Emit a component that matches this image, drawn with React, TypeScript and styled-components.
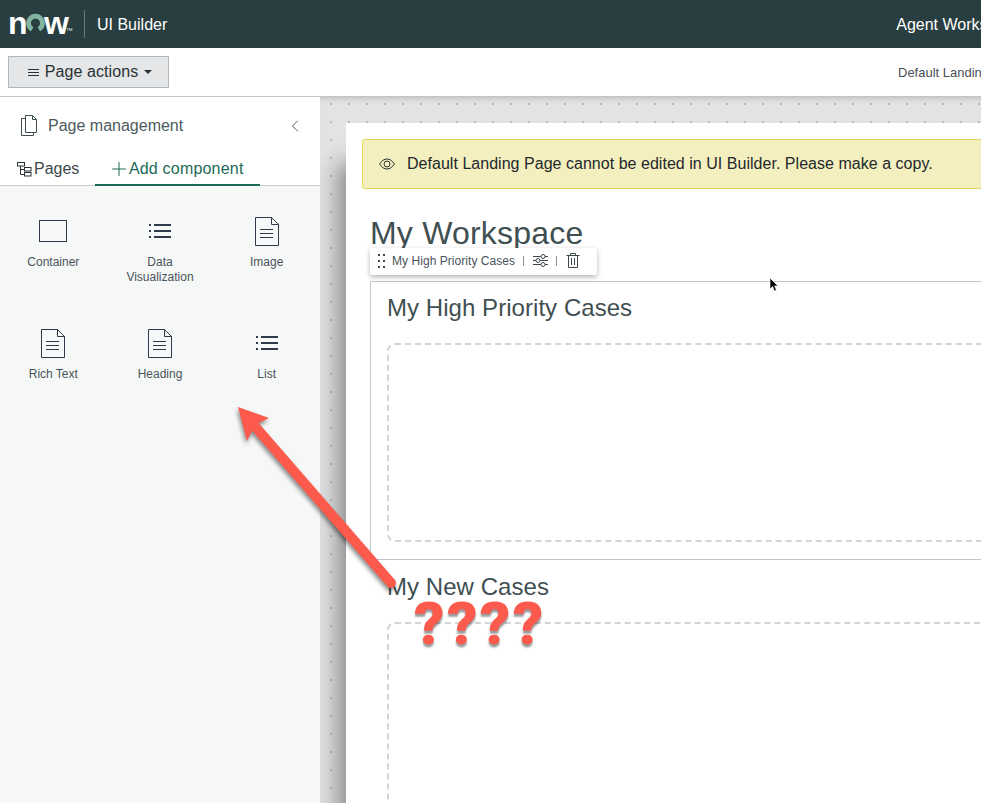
import styled, { createGlobalStyle } from "styled-components";
import { ChevronLeft, Plus } from "lucide-react";

const GlobalStyle = createGlobalStyle`
  html, body {
    margin: 0;
    height: 100%;
    overflow: hidden;
    background: #fff;
  }
  body {
    font-family: "Liberation Sans", Arial, sans-serif;
    color: #3f4d50;
  }
  #root { height: 100%; }
`;

const Shell = styled.div`
  position: relative;
  display: flex;
  flex-direction: column;
  width: 981px;
  height: 803px;
  overflow: hidden;
`;

const Header = styled.header`
  display: flex;
  align-items: center;
  flex: 0 0 48px;
  padding-left: 8px;
  background: #293e40;
  color: #fff;
  white-space: nowrap;
`;

const Logo = styled.div`
  display: flex;
  align-items: center;
  flex: 0 0 76px;
  height: 32px;
  margin-top: -2px;
  font-size: 32px;
  font-weight: 700;
  line-height: 32px;
  letter-spacing: -1.5px;
  color: #fff;

  svg {
    margin-right: -1px;
  }
`;

const Trademark = styled.span`
  align-self: flex-end;
  margin: 0 0 7px -1px;
  font-size: 4px;
  line-height: 4px;
  font-weight: 400;
  letter-spacing: 0;
`;

const Brand = styled.div`
  flex: none;
  padding-left: 12px;
  height: 28px;
  line-height: 30px;
  border-left: 1px solid #6b7c7e;
  font-size: 16px;
`;

const Workspace = styled.div`
  flex: none;
  margin: 2px 0 0 729px;
  font-size: 16px;
`;

const Toolbar = styled.div`
  display: flex;
  align-items: center;
  flex: 0 0 49px;
  box-sizing: border-box;
  padding-left: 8px;
  background: #fff;
  border-bottom: 1px solid #c4c6c8;
  white-space: nowrap;
`;

const ActionsButton = styled.button`
  display: flex;
  align-items: center;
  justify-content: center;
  gap: 6px;
  flex: 0 0 161px;
  height: 32px;
  padding: 0 0 0 3px;
  background: #e4e6e7;
  border: 1px solid #b2b8ba;
  color: #293135;
  font: 16px "Liberation Sans", Arial, sans-serif;
  letter-spacing: 0.1px;
`;

const Caret = styled.span`
  width: 0;
  height: 0;
  border-left: 4.5px solid transparent;
  border-right: 4.5px solid transparent;
  border-top: 4.5px solid #293135;
`;

const PageName = styled.div`
  flex: none;
  margin-left: 729px;
  font-size: 13px;
  color: #484f57;
`;

const Main = styled.div`
  display: flex;
  flex: 1;
  min-height: 0;
`;

const Sidebar = styled.aside`
  display: flex;
  flex-direction: column;
  flex: 0 0 320px;
  background: #f6f8f7;
`;

const SidebarHead = styled.div`
  background: #fff;
  border-bottom: 1px solid #c9cdce;
  height: 88px;
`;

const TitleRow = styled.div`
  display: flex;
  align-items: center;
  height: 57px;
  padding: 0 20px;
  gap: 10px;
  font-size: 16px;
  color: #4c5a5c;
`;

const Collapse = styled.span`
  display: flex;
  margin-left: auto;
  margin-right: -5px;
  color: #3f4d50;
`;

const Tabs = styled.div`
  display: flex;
  height: 31px;
  padding-left: 17px;
`;

const Tab = styled.div<{ $active?: boolean }>`
  display: flex;
  align-items: center;
  box-sizing: border-box;
  height: 32px;
  font-size: 16px;
  color: ${(p) => (p.$active ? "#1b6a57" : "#3c484b")};
  border-bottom: 2px solid ${(p) => (p.$active ? "#1b6a57" : "transparent")};
  margin-left: ${(p) => (p.$active ? "16px" : "0")};
  width: ${(p) => (p.$active ? "165px" : "auto")};
  padding-left: ${(p) => (p.$active ? "13px" : "0")};
  letter-spacing: ${(p) => (p.$active ? "0.2px" : "0")};

  svg + span {
    margin-left: -1.5px;
  }
`;

const ComponentGrid = styled.div`
  display: grid;
  grid-template-columns: repeat(3, 1fr);
  grid-auto-rows: 112px;
  padding-top: 29px;
`;

const ComponentItem = styled.div`
  display: flex;
  flex-direction: column;
  align-items: center;
  text-align: center;
  font-size: 12px;
  line-height: 15px;
  color: #4a545c;
`;

const ItemLabel = styled.div`
  width: 80px;
`;

const IconSlot = styled.div`
  display: flex;
  align-items: center;
  justify-content: center;
  height: 32px;
  margin-bottom: 8px;
  color: #2e3a4a;
`;

const Canvas = styled.section`
  flex: 1;
  min-width: 0;
  padding: 26px 0 0 26px;
  overflow: hidden;
  background-color: #e2e3e5;
  background-image: radial-gradient(circle, #b8babc 0.7px, transparent 1.1px);
  background-size: 18px 18px;
  background-position: 2px -2px;
  box-shadow: inset 0 6px 6px -5px rgba(0, 0, 0, 0.18);
`;

const PageSheet = styled.div`
  box-sizing: border-box;
  width: 900px;
  height: 900px;
  padding: 16px 0 0 16px;
  background: #fff;
  box-shadow: -8px 40px 22px rgba(0, 0, 0, 0.4);
`;

const Banner = styled.div`
  display: flex;
  align-items: center;
  gap: 12px;
  box-sizing: border-box;
  height: 50px;
  padding-left: 16px;
  background: #f4efbe;
  border: 1px solid #e2d95c;
  border-radius: 3px;
  font-size: 16px;
  letter-spacing: 0.03px;
  color: #22282c;
`;

const PageTitle = styled.h1`
  margin: 26px 0 0 8px;
  font-size: 32px;
  line-height: 37px;
  font-weight: 400;
  letter-spacing: 0.2px;
  color: #3f4f52;
`;

const CaseCard = styled.div`
  box-sizing: border-box;
  height: 279px;
  margin: 29px 0 0 8px;
  padding: 12px 0 0 16px;
  border: 1px solid #c2c5c6;
`;

const CaseTitle = styled.h2`
  margin: 0;
  font-size: 24px;
  line-height: 28px;
  font-weight: 400;
  letter-spacing: 0.05px;
  color: #3f4f52;
`;

const DropZone = styled.div<{ $height: number }>`
  height: ${(p) => p.$height}px;
  margin-top: 21px;
  border: 2px dashed #d2d5d6;
  border-radius: 8px;
`;

const PlainSection = styled.div`
  margin: 13px 0 0 25px;
  width: 700px;
`;

const SlotToolbar = styled.div`
  position: absolute;
  left: 370px;
  top: 248px;
  display: flex;
  align-items: center;
  box-sizing: border-box;
  width: 227px;
  height: 27px;
  padding: 0 0 2px 8px;
  background: #fff;
  border-radius: 2px;
  box-shadow: 0 2px 5px rgba(0, 0, 0, 0.3);
  font-size: 12px;
  letter-spacing: 0.05px;
  color: #4a545c;
  white-space: nowrap;
`;

const SlotDivider = styled.span`
  width: 1px;
  height: 10px;
  margin: 0 9px 0 8px;
  background: #8a9296;
`;

const Cursor = styled.svg`
  position: absolute;
  left: 769px;
  top: 277px;
`;

const Annotation = styled.svg`
  position: absolute;
  left: 0;
  top: 0;
  filter: drop-shadow(-1px 3px 2px rgba(0, 0, 0, 0.45));
`;

const QuestionMarks = styled.div`
  position: absolute;
  left: 414px;
  top: 590px;
  font-family: Roboto, "Liberation Sans", sans-serif;
  font-size: 60px;
  line-height: 68px;
  font-weight: 900;
  letter-spacing: 2.3px;
  color: #fb5a4c;
  text-shadow: 0 3px 2px rgba(0, 0, 0, 0.4);
`;

function ContainerIcon() {
  return (
    <svg width="30" height="24" viewBox="0 0 30 24" fill="none">
      <rect x="1.5" y="1.5" width="27" height="21" stroke="currentColor" />
    </svg>
  );
}

function ListIcon() {
  return (
    <svg width="22" height="16" viewBox="0 0 22 16" fill="currentColor">
      <rect x="0" y="1" width="2" height="2" />
      <rect x="0" y="7" width="2" height="2" />
      <rect x="0" y="13" width="2" height="2" />
      <rect x="5" y="1" width="17" height="2" />
      <rect x="5" y="7" width="17" height="2" />
      <rect x="5" y="13" width="17" height="2" />
    </svg>
  );
}

function DocIcon() {
  return (
    <svg width="24" height="29" viewBox="0 0 24 29" fill="none" stroke="currentColor">
      <path d="M0.5 0.5H16.5L23.5 7.5V28.5H0.5Z" />
      <path d="M16.5 0.5V7.5H23.5" />
      <path d="M5 12.5H18M5 16.5H18M5 20.5H18" />
    </svg>
  );
}

function PagesIcon() {
  return (
    <svg width="18" height="21" viewBox="0 0 18 21" fill="none" stroke="#3f4d50" strokeWidth="1">
      <path d="M5.5 0.5H12.5L16.5 4.5V17.5H5.5Z" fill="#fff" />
      <path d="M12.5 0.5V4.5H16.5" />
      <path d="M5.5 3.5H1.5V20.5H13.5V17.5" />
    </svg>
  );
}

function TreeIcon() {
  return (
    <svg width="15" height="15" viewBox="0 0 15 15" fill="none" stroke="#293135" style={{ marginRight: 2 }}>
      <rect x="0.5" y="0.5" width="7" height="3.5" />
      <rect x="7.5" y="5.5" width="6.5" height="3.5" />
      <rect x="7.5" y="10.5" width="6.5" height="3.5" />
      <path d="M3.5 4V12.5H7.5M3.5 7.5H7.5" />
    </svg>
  );
}

function MenuIcon() {
  return (
    <svg width="11" height="9" viewBox="0 0 11 9" stroke="#293135">
      <path d="M0 1.5H11M0 4.5H11M0 7.5H11" />
    </svg>
  );
}

function EyeIcon() {
  return (
    <svg width="16" height="12" viewBox="0 0 16 12" fill="none" stroke="#2c3236">
      <path d="M0.6 6C2.8 2.6 5.2 1 8 1S13.2 2.6 15.4 6C13.2 9.4 10.8 11 8 11S2.8 9.4 0.6 6Z" />
      <circle cx="8" cy="6" r="3" />
    </svg>
  );
}

function GripIcon() {
  return (
    <svg width="7" height="14" viewBox="0 0 7 14" fill="#3d464a" style={{ marginRight: 7 }}>
      <rect x="0" y="0" width="2" height="2" />
      <rect x="5" y="0" width="2" height="2" />
      <rect x="0" y="6" width="2" height="2" />
      <rect x="5" y="6" width="2" height="2" />
      <rect x="0" y="12" width="2" height="2" />
      <rect x="5" y="12" width="2" height="2" />
    </svg>
  );
}

function SlidersIcon() {
  return (
    <svg width="15" height="13" viewBox="0 0 15 13" fill="none" stroke="#3d464a">
      <path d="M0 2.5H8M12 2.5H15M0 6.5H3M7 6.5H15M0 10.5H8M12 10.5H15" />
      <circle cx="10" cy="2.5" r="2" />
      <circle cx="5" cy="6.5" r="2" />
      <circle cx="10" cy="10.5" r="2" />
    </svg>
  );
}

function TrashIcon() {
  return (
    <svg width="14" height="15" viewBox="0 0 14 15" fill="none" stroke="#3d464a">
      <path d="M0.5 2.5H13.5M4.5 2.5V0.5H9.5V2.5M2.5 2.5V14.5H11.5V2.5M5.5 5V12M8.5 5V12" />
    </svg>
  );
}

const components = [
  { name: "Container", icon: <ContainerIcon /> },
  { name: "Data Visualization", icon: <ListIcon /> },
  { name: "Image", icon: <DocIcon /> },
  { name: "Rich Text", icon: <DocIcon /> },
  { name: "Heading", icon: <DocIcon /> },
  { name: "List", icon: <ListIcon /> },
];

export default function App() {
  return (
    <Shell>
      <GlobalStyle />
      <Header>
        <Logo>
          n
          <svg width="19" height="20" viewBox="0 0 20 20" fill="none">
            <path d="M6.5 16.6A7.3 7.3 0 1 1 13.5 16.6" stroke="#81b5a1" strokeWidth="5" />
          </svg>
          w<Trademark>TM</Trademark>
        </Logo>
        <Brand>UI Builder</Brand>
        <Workspace>Agent Workspace</Workspace>
      </Header>
      <Toolbar>
        <ActionsButton>
          <MenuIcon />
          Page actions
          <Caret />
        </ActionsButton>
        <PageName>Default Landing Page</PageName>
      </Toolbar>
      <Main>
        <Sidebar>
          <SidebarHead>
            <TitleRow>
              <PagesIcon />
              Page management
              <Collapse>
                <ChevronLeft size={20} strokeWidth={1.1} />
              </Collapse>
            </TitleRow>
            <Tabs>
              <Tab>
                <TreeIcon />
                Pages
              </Tab>
              <Tab $active>
                <Plus size={22} strokeWidth={1.1} />
                <span>Add component</span>
              </Tab>
            </Tabs>
          </SidebarHead>
          <ComponentGrid>
            {components.map((item) => (
              <ComponentItem key={item.name}>
                <IconSlot>{item.icon}</IconSlot>
                <ItemLabel>{item.name}</ItemLabel>
              </ComponentItem>
            ))}
          </ComponentGrid>
        </Sidebar>
        <Canvas>
          <PageSheet>
            <Banner>
              <EyeIcon />
              Default Landing Page cannot be edited in UI Builder. Please make a copy.
            </Banner>
            <PageTitle>My Workspace</PageTitle>
            <CaseCard>
              <CaseTitle>My High Priority Cases</CaseTitle>
              <DropZone $height={195} />
            </CaseCard>
            <PlainSection>
              <CaseTitle>My New Cases</CaseTitle>
              <DropZone $height={300} />
            </PlainSection>
          </PageSheet>
        </Canvas>
      </Main>
      <SlotToolbar>
        <GripIcon />
        My High Priority Cases
        <SlotDivider />
        <SlidersIcon />
        <SlotDivider />
        <TrashIcon />
      </SlotToolbar>
      <Cursor width="10" height="16" viewBox="0 0 10 16">
        <path d="M1 1V12L3.6 9.6L5.4 14L7.4 13.2L5.6 9H9Z" fill="#000" stroke="#fff" strokeWidth="0.6" />
      </Cursor>
      <Annotation width="981" height="803" viewBox="0 0 981 803">
        <line x1="391" y1="583" x2="252" y2="423" stroke="#fb5a4c" strokeWidth="10" strokeLinecap="round" />
        <path d="M238 407L269 418L255 425L247 441Z" fill="#fb5a4c" />
      </Annotation>
      <QuestionMarks>????</QuestionMarks>
    </Shell>
  );
}
